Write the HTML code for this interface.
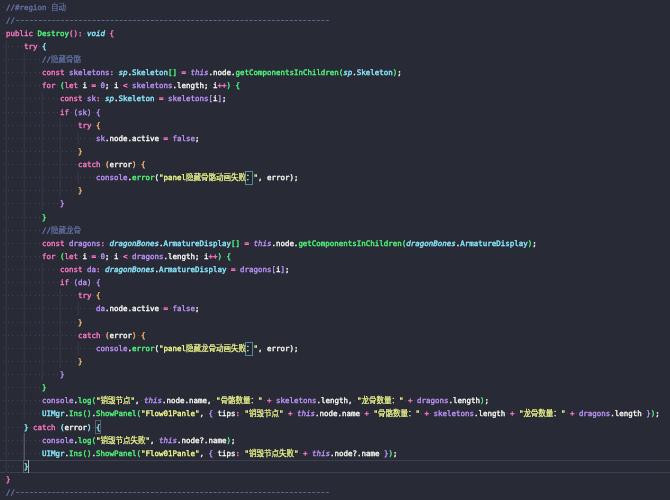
<!DOCTYPE html>
<html lang="zh-CN"><head><meta charset="utf-8"><title>Destroy</title><style>
html,body{margin:0;padding:0;background:#282a36;}
body{width:670px;height:500px;overflow:hidden;position:relative;}
#ed{position:absolute;left:0;top:0;width:670px;height:500px;overflow:hidden;background:#282a36;
 font-family:"DejaVu Sans Mono","Liberation Mono","Noto Sans CJK SC",monospace;font-size:7.4745px;color:#f8f8f2;
 font-kerning:none;font-variant-ligatures:none;-webkit-font-smoothing:antialiased;}
.ln{position:absolute;left:1.5px;height:13.14px;line-height:13.14px;white-space:pre;-webkit-text-stroke:0.35px;}
#tx{position:absolute;left:0;top:0;width:670px;height:500px;will-change:transform;}
.ln span,.ln b,.ln i{font-weight:normal;font-style:normal;}
.ln .z{font-family:"Noto Sans CJK SC","Liberation Mono",sans-serif;font-size:7.5px;line-height:0;-webkit-text-stroke:0.22px;}
.d{background:linear-gradient(#434555,#434555) 50% 52%/1.4px 1.4px no-repeat;}
.c{color:#6272a4}.k{color:#ff79c6}.g{color:#50fa7b}.y{color:#8be9fd}
.ln .yi{color:#8be9fd;font-style:italic}.p{color:#bd93f9}.ln .pi{color:#bd93f9;font-style:italic}
.s{color:#f1fa8c}.w{color:#f8f8f2}.o{color:#ffb86c}
.ln .h{color:#6272a4;font-size:9.4px;letter-spacing:-1.159px;line-height:0;position:relative;top:-0.5px}
.u{color:#f1fa8c}.m{color:#8be9fd}
.mb{position:absolute;box-sizing:border-box;border:1px solid #5c5e6c;background:#212a2c}
.ub{position:absolute;box-sizing:border-box;border:1px solid #4f8a9a;background:#242631}
.gd{position:absolute;width:2px;margin-left:-1px;background:linear-gradient(to right,#2d2f3b 50%,#333542 50%)}
.ga{background:linear-gradient(to right,#3a3c49 50%,#555766 50%)}
.cl{position:absolute;left:0;width:670px;box-sizing:border-box;border-top:1px solid #3c3f50;border-bottom:1px solid #3c3f50}
.cur{position:absolute;width:1px;background:#b4b4b6}
</style></head>
<body><div id="ed">
<div class="cl" style="top:460px;height:13px"></div>
<div class="mb" style="left:95px;top:420px;width:6px;height:14px"></div>
<div class="mb" style="left:23px;top:460px;width:6px;height:13px"></div>
<div class="ub" style="left:245px;top:171px;width:8px;height:14px"></div>
<div class="ub" style="left:245px;top:342px;width:8px;height:14px"></div>
<div class="cur" style="left:28px;top:460px;height:13px"></div>
<div class="gd" style="left:6.00px;top:39.67px;height:433.12px"></div>
<div class="gd" style="left:24.00px;top:52.80px;height:367.50px"></div>
<div class="gd ga" style="left:24.00px;top:433.43px;height:26.25px"></div>
<div class="gd" style="left:42.00px;top:92.17px;height:118.12px"></div>
<div class="gd" style="left:42.00px;top:262.80px;height:118.12px"></div>
<div class="gd" style="left:60.00px;top:118.42px;height:78.75px"></div>
<div class="gd" style="left:60.00px;top:289.05px;height:78.75px"></div>
<div class="gd" style="left:78.00px;top:131.55px;height:13.12px"></div>
<div class="gd" style="left:78.00px;top:170.93px;height:13.12px"></div>
<div class="gd" style="left:78.00px;top:302.18px;height:13.12px"></div>
<div class="gd" style="left:78.00px;top:341.55px;height:13.12px"></div>
<div id="tx">
<div class="ln" style="top:1px"><i class="d"> </i><span class="c">//#region<i class="d"> </i><b class="z">自动</b></span></div>
<div class="ln" style="top:14px"><i class="d"> </i><span class="c">//</span><span class="h">----------------------------------------------------------------------</span></div>
<div class="ln" style="top:27px"><i class="d"> </i><span class="k">public</span><i class="d"> </i><span class="g">Destroy</span><span class="k">()</span><span class="k">:</span><i class="d"> </i><span class="yi">void</span><i class="d"> </i><span class="k">{</span></div>
<div class="ln" style="top:40px"><i class="d"> </i><i class="d"> </i><i class="d"> </i><i class="d"> </i><i class="d"> </i><span class="k">try</span><i class="d"> </i><span class="y">{</span></div>
<div class="ln" style="top:53px"><i class="d"> </i><i class="d"> </i><i class="d"> </i><i class="d"> </i><i class="d"> </i><i class="d"> </i><i class="d"> </i><i class="d"> </i><i class="d"> </i><span class="c">//<b class="z">隐藏骨骼</b></span></div>
<div class="ln" style="top:66px"><i class="d"> </i><i class="d"> </i><i class="d"> </i><i class="d"> </i><i class="d"> </i><i class="d"> </i><i class="d"> </i><i class="d"> </i><i class="d"> </i><span class="k">const</span><i class="d"> </i><span class="p">skeletons</span><span class="k">:</span><i class="d"> </i><span class="yi">sp</span><span class="w">.</span><span class="y">Skeleton</span><span class="g">[]</span><i class="d"> </i><span class="k">=</span><i class="d"> </i><span class="pi">this</span><span class="w">.node.</span><span class="g">getComponentsInChildren</span><span class="g">(</span><span class="yi">sp</span><span class="w">.</span><span class="y">Skeleton</span><span class="g">)</span><span class="w">;</span></div>
<div class="ln" style="top:79px"><i class="d"> </i><i class="d"> </i><i class="d"> </i><i class="d"> </i><i class="d"> </i><i class="d"> </i><i class="d"> </i><i class="d"> </i><i class="d"> </i><span class="k">for</span><i class="d"> </i><span class="g">(</span><span class="k">let</span><i class="d"> </i><span class="w">i</span><i class="d"> </i><span class="k">=</span><i class="d"> </i><span class="p">0</span><span class="w">;</span><i class="d"> </i><span class="w">i</span><i class="d"> </i><span class="k">&lt;</span><i class="d"> </i><span class="p">skeletons</span><span class="w">.length;</span><i class="d"> </i><span class="w">i</span><span class="k">++</span><span class="g">)</span><i class="d"> </i><span class="g">{</span></div>
<div class="ln" style="top:92px"><i class="d"> </i><i class="d"> </i><i class="d"> </i><i class="d"> </i><i class="d"> </i><i class="d"> </i><i class="d"> </i><i class="d"> </i><i class="d"> </i><i class="d"> </i><i class="d"> </i><i class="d"> </i><i class="d"> </i><span class="k">const</span><i class="d"> </i><span class="p">sk</span><span class="k">:</span><i class="d"> </i><span class="yi">sp</span><span class="w">.</span><span class="y">Skeleton</span><i class="d"> </i><span class="k">=</span><i class="d"> </i><span class="p">skeletons</span><span class="p">[</span><span class="w">i</span><span class="p">]</span><span class="w">;</span></div>
<div class="ln" style="top:106px"><i class="d"> </i><i class="d"> </i><i class="d"> </i><i class="d"> </i><i class="d"> </i><i class="d"> </i><i class="d"> </i><i class="d"> </i><i class="d"> </i><i class="d"> </i><i class="d"> </i><i class="d"> </i><i class="d"> </i><span class="k">if</span><i class="d"> </i><span class="p">(</span><span class="p">sk</span><span class="p">)</span><i class="d"> </i><span class="p">{</span></div>
<div class="ln" style="top:119px"><i class="d"> </i><i class="d"> </i><i class="d"> </i><i class="d"> </i><i class="d"> </i><i class="d"> </i><i class="d"> </i><i class="d"> </i><i class="d"> </i><i class="d"> </i><i class="d"> </i><i class="d"> </i><i class="d"> </i><i class="d"> </i><i class="d"> </i><i class="d"> </i><i class="d"> </i><span class="k">try</span><i class="d"> </i><span class="o">{</span></div>
<div class="ln" style="top:132px"><i class="d"> </i><i class="d"> </i><i class="d"> </i><i class="d"> </i><i class="d"> </i><i class="d"> </i><i class="d"> </i><i class="d"> </i><i class="d"> </i><i class="d"> </i><i class="d"> </i><i class="d"> </i><i class="d"> </i><i class="d"> </i><i class="d"> </i><i class="d"> </i><i class="d"> </i><i class="d"> </i><i class="d"> </i><i class="d"> </i><i class="d"> </i><span class="p">sk</span><span class="w">.node.active</span><i class="d"> </i><span class="k">=</span><i class="d"> </i><span class="p">false</span><span class="w">;</span></div>
<div class="ln" style="top:145px"><i class="d"> </i><i class="d"> </i><i class="d"> </i><i class="d"> </i><i class="d"> </i><i class="d"> </i><i class="d"> </i><i class="d"> </i><i class="d"> </i><i class="d"> </i><i class="d"> </i><i class="d"> </i><i class="d"> </i><i class="d"> </i><i class="d"> </i><i class="d"> </i><i class="d"> </i><span class="o">}</span></div>
<div class="ln" style="top:158px"><i class="d"> </i><i class="d"> </i><i class="d"> </i><i class="d"> </i><i class="d"> </i><i class="d"> </i><i class="d"> </i><i class="d"> </i><i class="d"> </i><i class="d"> </i><i class="d"> </i><i class="d"> </i><i class="d"> </i><i class="d"> </i><i class="d"> </i><i class="d"> </i><i class="d"> </i><span class="k">catch</span><i class="d"> </i><span class="o">(</span><span class="w">error</span><span class="o">)</span><i class="d"> </i><span class="o">{</span></div>
<div class="ln" style="top:171px"><i class="d"> </i><i class="d"> </i><i class="d"> </i><i class="d"> </i><i class="d"> </i><i class="d"> </i><i class="d"> </i><i class="d"> </i><i class="d"> </i><i class="d"> </i><i class="d"> </i><i class="d"> </i><i class="d"> </i><i class="d"> </i><i class="d"> </i><i class="d"> </i><i class="d"> </i><i class="d"> </i><i class="d"> </i><i class="d"> </i><i class="d"> </i><span class="p">console</span><span class="w">.</span><span class="g">error</span><span class="w">(</span><span class="s">"panel<b class="z">隐藏骨骼动画失败</b></span><span class="u"><b class="z">：</b></span><span class="s">"</span><span class="w">,</span><i class="d"> </i><span class="w">error</span><span class="w">);</span></div>
<div class="ln" style="top:184px"><i class="d"> </i><i class="d"> </i><i class="d"> </i><i class="d"> </i><i class="d"> </i><i class="d"> </i><i class="d"> </i><i class="d"> </i><i class="d"> </i><i class="d"> </i><i class="d"> </i><i class="d"> </i><i class="d"> </i><i class="d"> </i><i class="d"> </i><i class="d"> </i><i class="d"> </i><span class="o">}</span></div>
<div class="ln" style="top:197px"><i class="d"> </i><i class="d"> </i><i class="d"> </i><i class="d"> </i><i class="d"> </i><i class="d"> </i><i class="d"> </i><i class="d"> </i><i class="d"> </i><i class="d"> </i><i class="d"> </i><i class="d"> </i><i class="d"> </i><span class="p">}</span></div>
<div class="ln" style="top:211px"><i class="d"> </i><i class="d"> </i><i class="d"> </i><i class="d"> </i><i class="d"> </i><i class="d"> </i><i class="d"> </i><i class="d"> </i><i class="d"> </i><span class="g">}</span></div>
<div class="ln" style="top:224px"><i class="d"> </i><i class="d"> </i><i class="d"> </i><i class="d"> </i><i class="d"> </i><i class="d"> </i><i class="d"> </i><i class="d"> </i><i class="d"> </i><span class="c">//<b class="z">隐藏龙骨</b></span></div>
<div class="ln" style="top:237px"><i class="d"> </i><i class="d"> </i><i class="d"> </i><i class="d"> </i><i class="d"> </i><i class="d"> </i><i class="d"> </i><i class="d"> </i><i class="d"> </i><span class="k">const</span><i class="d"> </i><span class="p">dragons</span><span class="k">:</span><i class="d"> </i><span class="yi">dragonBones</span><span class="w">.</span><span class="y">ArmatureDisplay</span><span class="g">[]</span><i class="d"> </i><span class="k">=</span><i class="d"> </i><span class="pi">this</span><span class="w">.node.</span><span class="g">getComponentsInChildren</span><span class="g">(</span><span class="yi">dragonBones</span><span class="w">.</span><span class="y">ArmatureDisplay</span><span class="g">)</span><span class="w">;</span></div>
<div class="ln" style="top:250px"><i class="d"> </i><i class="d"> </i><i class="d"> </i><i class="d"> </i><i class="d"> </i><i class="d"> </i><i class="d"> </i><i class="d"> </i><i class="d"> </i><span class="k">for</span><i class="d"> </i><span class="g">(</span><span class="k">let</span><i class="d"> </i><span class="w">i</span><i class="d"> </i><span class="k">=</span><i class="d"> </i><span class="p">0</span><span class="w">;</span><i class="d"> </i><span class="w">i</span><i class="d"> </i><span class="k">&lt;</span><i class="d"> </i><span class="p">dragons</span><span class="w">.length;</span><i class="d"> </i><span class="w">i</span><span class="k">++</span><span class="g">)</span><i class="d"> </i><span class="g">{</span></div>
<div class="ln" style="top:263px"><i class="d"> </i><i class="d"> </i><i class="d"> </i><i class="d"> </i><i class="d"> </i><i class="d"> </i><i class="d"> </i><i class="d"> </i><i class="d"> </i><i class="d"> </i><i class="d"> </i><i class="d"> </i><i class="d"> </i><span class="k">const</span><i class="d"> </i><span class="p">da</span><span class="k">:</span><i class="d"> </i><span class="yi">dragonBones</span><span class="w">.</span><span class="y">ArmatureDisplay</span><i class="d"> </i><span class="k">=</span><i class="d"> </i><span class="p">dragons</span><span class="p">[</span><span class="w">i</span><span class="p">]</span><span class="w">;</span></div>
<div class="ln" style="top:276px"><i class="d"> </i><i class="d"> </i><i class="d"> </i><i class="d"> </i><i class="d"> </i><i class="d"> </i><i class="d"> </i><i class="d"> </i><i class="d"> </i><i class="d"> </i><i class="d"> </i><i class="d"> </i><i class="d"> </i><span class="k">if</span><i class="d"> </i><span class="p">(</span><span class="p">da</span><span class="p">)</span><i class="d"> </i><span class="p">{</span></div>
<div class="ln" style="top:289px"><i class="d"> </i><i class="d"> </i><i class="d"> </i><i class="d"> </i><i class="d"> </i><i class="d"> </i><i class="d"> </i><i class="d"> </i><i class="d"> </i><i class="d"> </i><i class="d"> </i><i class="d"> </i><i class="d"> </i><i class="d"> </i><i class="d"> </i><i class="d"> </i><i class="d"> </i><span class="k">try</span><i class="d"> </i><span class="o">{</span></div>
<div class="ln" style="top:302px"><i class="d"> </i><i class="d"> </i><i class="d"> </i><i class="d"> </i><i class="d"> </i><i class="d"> </i><i class="d"> </i><i class="d"> </i><i class="d"> </i><i class="d"> </i><i class="d"> </i><i class="d"> </i><i class="d"> </i><i class="d"> </i><i class="d"> </i><i class="d"> </i><i class="d"> </i><i class="d"> </i><i class="d"> </i><i class="d"> </i><i class="d"> </i><span class="p">da</span><span class="w">.node.active</span><i class="d"> </i><span class="k">=</span><i class="d"> </i><span class="p">false</span><span class="w">;</span></div>
<div class="ln" style="top:316px"><i class="d"> </i><i class="d"> </i><i class="d"> </i><i class="d"> </i><i class="d"> </i><i class="d"> </i><i class="d"> </i><i class="d"> </i><i class="d"> </i><i class="d"> </i><i class="d"> </i><i class="d"> </i><i class="d"> </i><i class="d"> </i><i class="d"> </i><i class="d"> </i><i class="d"> </i><span class="o">}</span></div>
<div class="ln" style="top:329px"><i class="d"> </i><i class="d"> </i><i class="d"> </i><i class="d"> </i><i class="d"> </i><i class="d"> </i><i class="d"> </i><i class="d"> </i><i class="d"> </i><i class="d"> </i><i class="d"> </i><i class="d"> </i><i class="d"> </i><i class="d"> </i><i class="d"> </i><i class="d"> </i><i class="d"> </i><span class="k">catch</span><i class="d"> </i><span class="o">(</span><span class="w">error</span><span class="o">)</span><i class="d"> </i><span class="o">{</span></div>
<div class="ln" style="top:342px"><i class="d"> </i><i class="d"> </i><i class="d"> </i><i class="d"> </i><i class="d"> </i><i class="d"> </i><i class="d"> </i><i class="d"> </i><i class="d"> </i><i class="d"> </i><i class="d"> </i><i class="d"> </i><i class="d"> </i><i class="d"> </i><i class="d"> </i><i class="d"> </i><i class="d"> </i><i class="d"> </i><i class="d"> </i><i class="d"> </i><i class="d"> </i><span class="p">console</span><span class="w">.</span><span class="g">error</span><span class="w">(</span><span class="s">"panel<b class="z">隐藏龙骨动画失败</b></span><span class="u"><b class="z">：</b></span><span class="s">"</span><span class="w">,</span><i class="d"> </i><span class="w">error</span><span class="w">);</span></div>
<div class="ln" style="top:355px"><i class="d"> </i><i class="d"> </i><i class="d"> </i><i class="d"> </i><i class="d"> </i><i class="d"> </i><i class="d"> </i><i class="d"> </i><i class="d"> </i><i class="d"> </i><i class="d"> </i><i class="d"> </i><i class="d"> </i><i class="d"> </i><i class="d"> </i><i class="d"> </i><i class="d"> </i><span class="o">}</span></div>
<div class="ln" style="top:368px"><i class="d"> </i><i class="d"> </i><i class="d"> </i><i class="d"> </i><i class="d"> </i><i class="d"> </i><i class="d"> </i><i class="d"> </i><i class="d"> </i><i class="d"> </i><i class="d"> </i><i class="d"> </i><i class="d"> </i><span class="p">}</span></div>
<div class="ln" style="top:381px"><i class="d"> </i><i class="d"> </i><i class="d"> </i><i class="d"> </i><i class="d"> </i><i class="d"> </i><i class="d"> </i><i class="d"> </i><i class="d"> </i><span class="g">}</span></div>
<div class="ln" style="top:394px"><i class="d"> </i><i class="d"> </i><i class="d"> </i><i class="d"> </i><i class="d"> </i><i class="d"> </i><i class="d"> </i><i class="d"> </i><i class="d"> </i><span class="p">console</span><span class="w">.</span><span class="g">log</span><span class="g">(</span><span class="s">"<b class="z">销毁节点</b>"</span><span class="w">,</span><i class="d"> </i><span class="pi">this</span><span class="w">.node.name,</span><i class="d"> </i><span class="s">"<b class="z">骨骼数量：</b>"</span><i class="d"> </i><span class="k">+</span><i class="d"> </i><span class="p">skeletons</span><span class="w">.length,</span><i class="d"> </i><span class="s">"<b class="z">龙骨数量：</b>"</span><i class="d"> </i><span class="k">+</span><i class="d"> </i><span class="p">dragons</span><span class="w">.length</span><span class="g">)</span><span class="w">;</span></div>
<div class="ln" style="top:407px"><i class="d"> </i><i class="d"> </i><i class="d"> </i><i class="d"> </i><i class="d"> </i><i class="d"> </i><i class="d"> </i><i class="d"> </i><i class="d"> </i><span class="y">UIMgr</span><span class="w">.</span><span class="g">Ins</span><span class="g">()</span><span class="w">.</span><span class="g">ShowPanel</span><span class="g">(</span><span class="s">"Flow01Panle"</span><span class="w">,</span><i class="d"> </i><span class="p">{</span><i class="d"> </i><span class="w">tips</span><span class="k">:</span><i class="d"> </i><span class="s">"<b class="z">销毁节点</b>"</span><i class="d"> </i><span class="k">+</span><i class="d"> </i><span class="pi">this</span><span class="w">.node.name</span><i class="d"> </i><span class="k">+</span><i class="d"> </i><span class="s">"<b class="z">骨骼数量：</b>"</span><i class="d"> </i><span class="k">+</span><i class="d"> </i><span class="p">skeletons</span><span class="w">.length</span><i class="d"> </i><span class="k">+</span><i class="d"> </i><span class="s">"<b class="z">龙骨数量：</b>"</span><i class="d"> </i><span class="k">+</span><i class="d"> </i><span class="p">dragons</span><span class="w">.length</span><i class="d"> </i><span class="p">}</span><span class="g">)</span><span class="w">;</span></div>
<div class="ln" style="top:421px"><i class="d"> </i><i class="d"> </i><i class="d"> </i><i class="d"> </i><i class="d"> </i><span class="y">}</span><i class="d"> </i><span class="k">catch</span><i class="d"> </i><span class="y">(</span><span class="w">error</span><span class="y">)</span><i class="d"> </i><span class="m">{</span></div>
<div class="ln" style="top:434px"><i class="d"> </i><i class="d"> </i><i class="d"> </i><i class="d"> </i><i class="d"> </i><i class="d"> </i><i class="d"> </i><i class="d"> </i><i class="d"> </i><span class="p">console</span><span class="w">.</span><span class="g">log</span><span class="g">(</span><span class="s">"<b class="z">销毁节点失败</b>"</span><span class="w">,</span><i class="d"> </i><span class="pi">this</span><span class="w">.node?.name</span><span class="g">)</span><span class="w">;</span></div>
<div class="ln" style="top:447px"><i class="d"> </i><i class="d"> </i><i class="d"> </i><i class="d"> </i><i class="d"> </i><i class="d"> </i><i class="d"> </i><i class="d"> </i><i class="d"> </i><span class="y">UIMgr</span><span class="w">.</span><span class="g">Ins</span><span class="g">()</span><span class="w">.</span><span class="g">ShowPanel</span><span class="g">(</span><span class="s">"Flow01Panle"</span><span class="w">,</span><i class="d"> </i><span class="p">{</span><i class="d"> </i><span class="w">tips</span><span class="k">:</span><i class="d"> </i><span class="s">"<b class="z">销毁节点失败</b>"</span><i class="d"> </i><span class="k">+</span><i class="d"> </i><span class="pi">this</span><span class="w">.node?.name</span><i class="d"> </i><span class="p">}</span><span class="g">)</span><span class="w">;</span></div>
<div class="ln" style="top:460px"><i class="d"> </i><i class="d"> </i><i class="d"> </i><i class="d"> </i><i class="d"> </i><span class="m">}</span></div>
<div class="ln" style="top:473px"><i class="d"> </i><span class="k">}</span></div>
<div class="ln" style="top:486px"><i class="d"> </i><span class="c">//</span><span class="h">----------------------------------------------------------------------</span></div>
</div>
</div></body></html>
